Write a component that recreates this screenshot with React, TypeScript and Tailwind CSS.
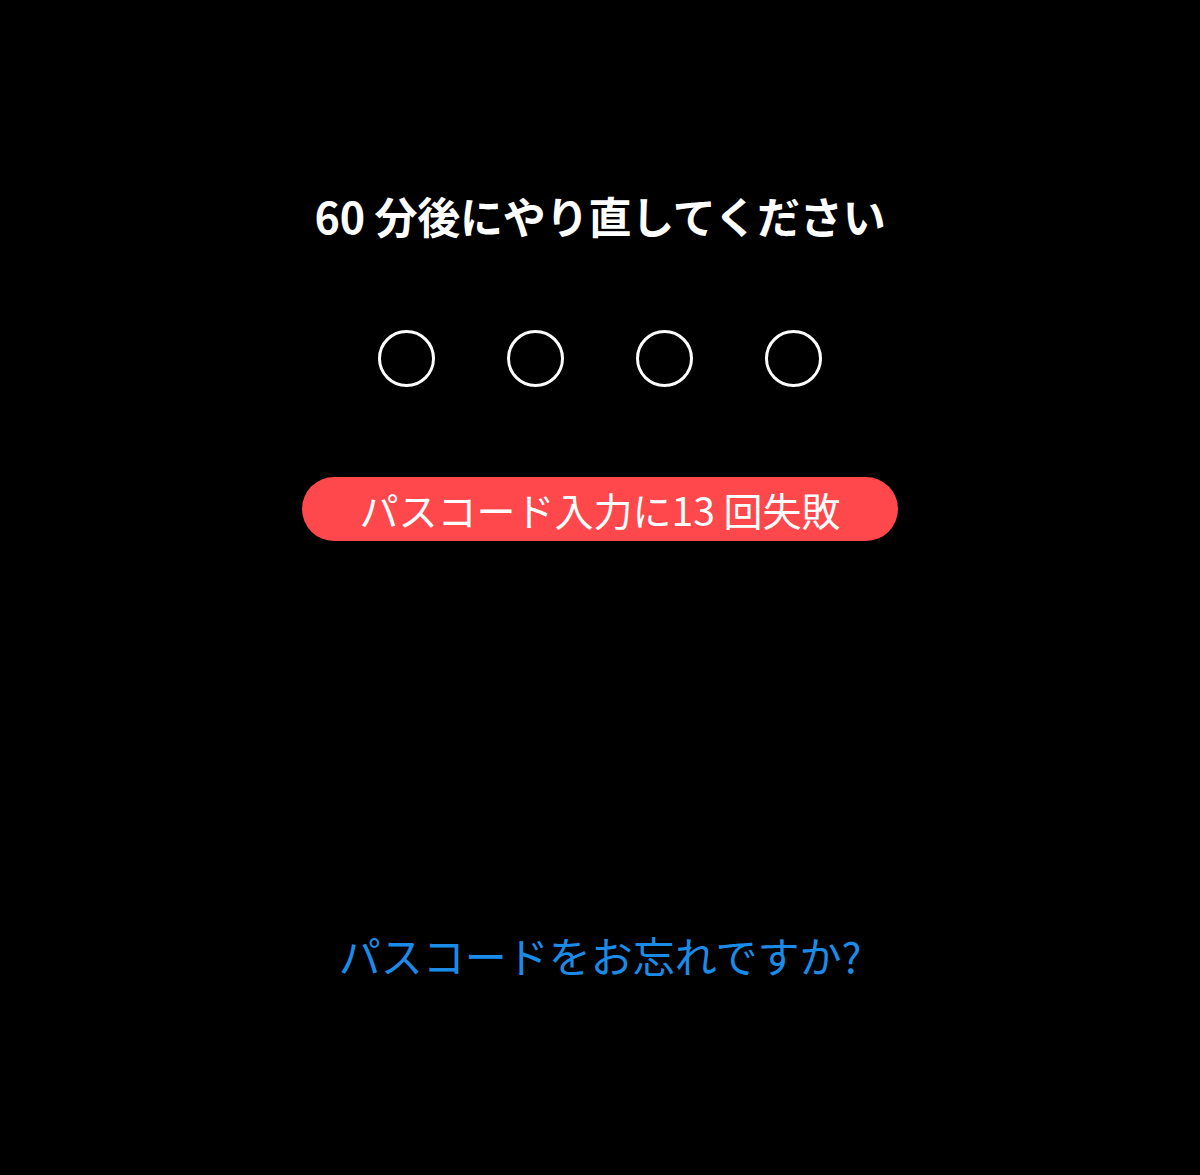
import React from "react";

export default function App() {
  const font = { fontFamily: '"Noto Sans CJK JP", "Noto Sans", sans-serif' };
  return (
    <div className="min-h-[1175px] w-full bg-black flex flex-col items-center" style={font}>
      <div className="mt-[194px] text-[43px] leading-[43px] font-semibold text-white whitespace-nowrap tracking-[-0.2px]">
        60 分後にやり直してください
      </div>
      <div className="mt-[93px] flex gap-[72px]">
        {[0, 1, 2, 3].map((i) => (
          <div key={i} className="w-[57px] h-[57px] rounded-full border-[3px] border-white" />
        ))}
      </div>
      <div className="mt-[90px] w-[596px] h-[64px] rounded-full bg-[#ff484b] flex items-center justify-center text-white text-[39px] leading-none whitespace-nowrap">
        パスコード入力に13 回失敗
      </div>
      <div className="mt-[393px] text-[42px] leading-[42px] text-[#1a8ce8] whitespace-nowrap">
        パスコードをお忘れですか?
      </div>
    </div>
  );
}
